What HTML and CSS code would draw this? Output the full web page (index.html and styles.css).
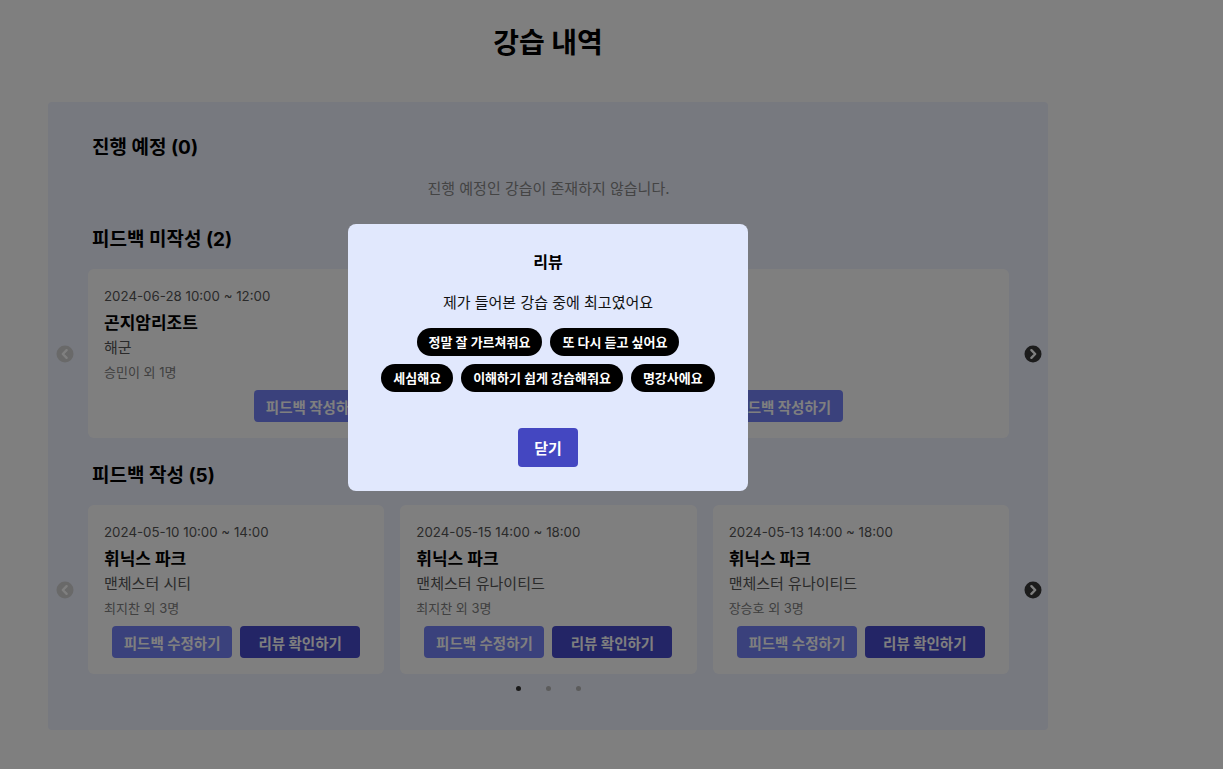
FILE: index.html
```html
<!DOCTYPE html>
<html lang="ko">
<head>
<meta charset="utf-8">
<title>강습 내역</title>
<link rel="stylesheet" href="styles.css">
</head>
<body>
<div class="page">
  <h1 class="page-title">강습 내역</h1>
  <div class="panel">
    <h2 class="sec-title">진행 예정 (0)</h2>
    <p class="empty">진행 예정인 강습이 존재하지 않습니다.</p>

    <h2 class="sec-title sec-next">피드백 미작성 (2)</h2>
    <div class="carousel">
      <span class="arrow arrow-off">
        <svg viewBox="0 0 18 18" width="18" height="18"><circle cx="9" cy="9" r="8.5"/><path d="M10.6 5.2 L6.8 9 L10.6 12.8"/></svg>
      </span>
      <div class="cards cards-2">
        <div class="card">
          <div class="date">2024-06-28 10:00 ~ 12:00</div>
          <div class="name">곤지암리조트</div>
          <div class="team">해군</div>
          <div class="people">승민이 외 1명</div>
          <div class="actions"><button class="btn btn-light">피드백 작성하기</button></div>
        </div>
        <div class="card">
          <div class="date hidden-under">2024-06-21 10:00 ~ 12:00</div>
          <div class="name hidden-under">곤지암리조트</div>
          <div class="team hidden-under">해군</div>
          <div class="people hidden-under">승민이 외 1명</div>
          <div class="actions"><button class="btn btn-light">피드백 작성하기</button></div>
        </div>
      </div>
      <span class="arrow arrow-on">
        <svg viewBox="0 0 18 18" width="18" height="18"><circle cx="9" cy="9" r="8.5"/><path d="M7.4 5.2 L11.2 9 L7.4 12.8"/></svg>
      </span>
    </div>

    <h2 class="sec-title sec-after">피드백 작성 (5)</h2>
    <div class="carousel">
      <span class="arrow arrow-off">
        <svg viewBox="0 0 18 18" width="18" height="18"><circle cx="9" cy="9" r="8.5"/><path d="M10.6 5.2 L6.8 9 L10.6 12.8"/></svg>
      </span>
      <div class="cards cards-3">
        <div class="card">
          <div class="date">2024-05-10 10:00 ~ 14:00</div>
          <div class="name">휘닉스 파크</div>
          <div class="team">맨체스터 시티</div>
          <div class="people">최지찬 외 3명</div>
          <div class="actions"><button class="btn btn-light">피드백 수정하기</button><button class="btn btn-dark">리뷰 확인하기</button></div>
        </div>
        <div class="card">
          <div class="date">2024-05-15 14:00 ~ 18:00</div>
          <div class="name">휘닉스 파크</div>
          <div class="team">맨체스터 유나이티드</div>
          <div class="people">최지찬 외 3명</div>
          <div class="actions"><button class="btn btn-light">피드백 수정하기</button><button class="btn btn-dark">리뷰 확인하기</button></div>
        </div>
        <div class="card">
          <div class="date">2024-05-13 14:00 ~ 18:00</div>
          <div class="name">휘닉스 파크</div>
          <div class="team">맨체스터 유나이티드</div>
          <div class="people">장승호 외 3명</div>
          <div class="actions"><button class="btn btn-light">피드백 수정하기</button><button class="btn btn-dark">리뷰 확인하기</button></div>
        </div>
      </div>
      <span class="arrow arrow-on">
        <svg viewBox="0 0 18 18" width="18" height="18"><circle cx="9" cy="9" r="8.5"/><path d="M7.4 5.2 L11.2 9 L7.4 12.8"/></svg>
      </span>
    </div>
    <div class="dots"><span class="dot dot-active"></span><span class="dot"></span><span class="dot"></span></div>
  </div>
</div>

<div class="overlay"></div>
<div class="modal">
  <h3 class="modal-title">리뷰</h3>
  <p class="modal-text">제가 들어본 강습 중에 최고였어요</p>
  <div class="tags">
    <div class="tag-row"><span class="tag">정말 잘 가르쳐줘요</span><span class="tag">또 다시 듣고 싶어요</span></div>
    <div class="tag-row"><span class="tag">세심해요</span><span class="tag">이해하기 쉽게 강습해줘요</span><span class="tag">명강사에요</span></div>
  </div>
  <button class="close-btn">닫기</button>
</div>
</body>
</html>
```

FILE: styles.css
```css
* { box-sizing: border-box; }
html, body { margin: 0; padding: 0; }
body {
  background: #ffffff;
  font-family: Inter, "Noto Sans CJK KR", "Noto Sans", sans-serif;
  color: #111;
}
.page {
  width: 1000px;
  margin-left: 48px;
}
.page-title {
  margin: 25px 0 41px;
  font-size: 28px;
  line-height: 36px;
  font-weight: 700;
  text-align: center;
  color: #000;
}
.panel {
  background: #eef2ff;
  border-radius: 4px;
  padding: 33px 7px 39px 8px;
}
.sec-title {
  margin: 0;
  padding-left: 36px;
  font-size: 19px;
  line-height: 26px;
  font-weight: 700;
  color: #000;
}
.sec-next { margin-top: 28px; }
.sec-after { margin-top: 25px; }
.empty {
  margin: 18px 0 0;
  font-size: 15px;
  line-height: 20px;
  color: #888;
  text-align: center;
}
.carousel {
  margin-top: 16px;
  display: grid;
  grid-template-columns: 17px 1fr 17px;
  column-gap: 15px;
  align-items: center;
}
.arrow { display: flex; width: 17px; height: 18px; justify-content: center; }
.arrow svg { flex: none; }
.arrow svg path { fill: none; stroke: #fff; stroke-width: 2.4; stroke-linecap: round; stroke-linejoin: round; }
.arrow-off svg circle { fill: #d2d2d2; }
.arrow-on svg circle { fill: #383838; }
.cards { display: grid; column-gap: 16px; }
.cards-2 { grid-template-columns: 1fr 1fr; }
.cards-3 { grid-template-columns: 1fr 1fr 1fr; }
.card {
  background: #fff;
  border-radius: 6px;
  padding: 17px 16px 16px;
}
.hidden-under { visibility: hidden; }
.date { font-size: 13.3px; line-height: 20px; color: #555; }
.name { margin-top: 5px; font-size: 17px; line-height: 24px; font-weight: 700; color: #000; }
.team { margin-top: 2px; font-size: 15px; line-height: 22px; color: #555; }
.people { margin-top: 3px; font-size: 13px; line-height: 20px; color: #808080; }
.actions {
  margin-top: 8px;
  display: flex;
  justify-content: center;
  gap: 8px;
}
.btn {
  width: 120px;
  height: 32px;
  border: 0;
  border-radius: 4px;
  font-family: inherit;
  font-size: 14.5px;
  font-weight: 700;
  color: #fff;
  padding: 0;
}
.btn-light { background: #7482f8; }
.btn-dark { background: #464acc; }
.dots {
  margin-top: 12px;
  display: flex;
  justify-content: center;
  gap: 25px;
}
.dot { width: 5px; height: 5px; border-radius: 50%; background: #b8b8b8; }
.dot-active { background: #333; }

.overlay {
  position: fixed;
  inset: 0;
  background: rgba(0, 0, 0, 0.5);
}
.modal {
  position: fixed;
  left: 348px;
  top: 224px;
  width: 400px;
  padding: 26px 24px 24px;
  background: #e1e8fd;
  border-radius: 8px;
  text-align: center;
}
.modal-title { margin: 0; font-size: 16px; line-height: 24px; font-weight: 700; color: #000; }
.modal-text { margin: 18px 0 0; font-size: 15px; line-height: 22px; color: #111; }
.tags { margin-top: 14px; display: flex; flex-direction: column; gap: 8px; }
.tag-row { display: flex; justify-content: center; gap: 8px; }
.tag {
  height: 28px;
  line-height: 28px;
  padding: 0 12px;
  border-radius: 14px;
  background: #000;
  color: #fff;
  font-size: 13px;
  font-weight: 700;
  white-space: nowrap;
}
.close-btn {
  margin-top: 36px;
  width: 60px;
  height: 39px;
  border: 0;
  border-radius: 4px;
  background: #4447c1;
  color: #fff;
  font-family: inherit;
  font-size: 15px;
  font-weight: 700;
  padding: 0;
}
```
